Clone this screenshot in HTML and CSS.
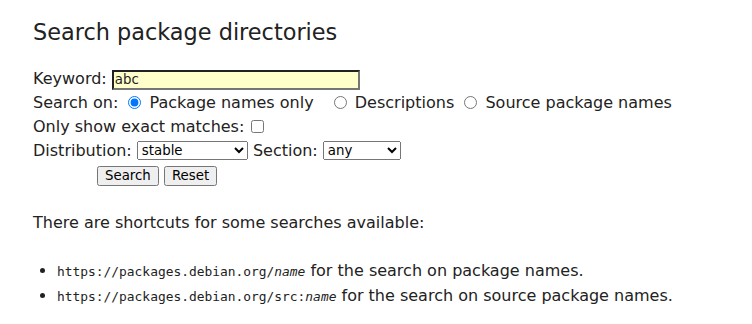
FILE: index.html
```html
<!DOCTYPE html>
<html lang="en">
<head>
    <meta charset="UTF-8">
    <title>Debian -- Package Search</title>
    <link rel="stylesheet" href="styles.css">
</head>
<body>
    <div id="content">
        <h1>Search package directories</h1>

        <form class="search-form">
            <div class="row">
                Keyword: <input type="text" class="keyword" value="abc">
            </div>
            <div class="row">
                Search on:
                <label><input type="radio" name="searchon" checked> Package names only</label>
                <label class="opt"><input type="radio" name="searchon"> Descriptions</label>
                <label><input type="radio" name="searchon"> Source package names</label>
            </div>
            <div class="row">
                Only show exact matches: <input type="checkbox" class="exact">
            </div>
            <div class="row">
                Distribution:
                <select class="dist">
                    <option>stable</option>
                </select>
                Section:
                <select class="section">
                    <option>any</option>
                </select>
            </div>
            <div class="row buttons">
                <input type="submit" value="Search">
                <input type="reset" value="Reset">
            </div>
        </form>

        <p class="shortcuts">There are shortcuts for some searches available:</p>
        <ul class="shortcut-list">
            <li><code>https://packages.debian.org/<em>name</em></code> for the search on package names.</li>
            <li><code>https://packages.debian.org/src:<em>name</em></code> for the search on source package names.</li>
        </ul>
    </div>
</body>
</html>
```

FILE: styles.css
```css
body {
    font-family: 'DejaVu Sans', sans-serif;
    font-size: 16px;
    color: #222;
    background-color: #fff;
    margin: 0;
    padding: 0;
}

#content {
    padding: 0 33px;
}

h1 {
    font-weight: normal;
    font-size: 22.4px;
    margin: 0;
    padding-top: 18px;
    line-height: 28px;
}

.search-form {
    margin-top: 21px;
}

.row {
    line-height: 24px;
    height: 24px;
}

.keyword {
    font-family: 'DejaVu Sans', sans-serif;
    font-size: 13.33px;
    line-height: 16px;
    width: 242px;
    height: 16px;
    padding: 0 1px;
    border: 2px inset #767676;
    background-color: #ffffcc;
    color: #222;
    outline: none;
    margin: 0;
}

.row input[type="radio"] {
    margin: 0 3px 0 5px;
    vertical-align: -1px;
}

.opt {
    margin-left: 10px;
}

.exact {
    margin: 0 2px;
    vertical-align: -1px;
}

select {
    font-family: 'DejaVu Sans', sans-serif;
    font-size: 13.33px;
    height: 19px;
    padding: 0;
    vertical-align: 1px;
}

.dist {
    width: 111px;
}

.section {
    width: 78px;
}

.buttons {
    padding-left: 64px;
    margin-top: 1px;
}

.buttons input {
    font-family: 'DejaVu Sans', sans-serif;
    font-size: 13.33px;
    height: 20px;
    padding: 0 6px;
    vertical-align: 1px;
}

.shortcuts {
    margin: 23px 0 0;
    line-height: 24px;
}

.shortcut-list {
    margin: 23px 0 0;
    padding-left: 24px;
}

.shortcut-list li {
    line-height: 25px;
    height: 25px;
}

code {
    font-family: 'DejaVu Sans Mono', monospace;
    font-size: 12.9px;
    line-height: 1;
}
```
